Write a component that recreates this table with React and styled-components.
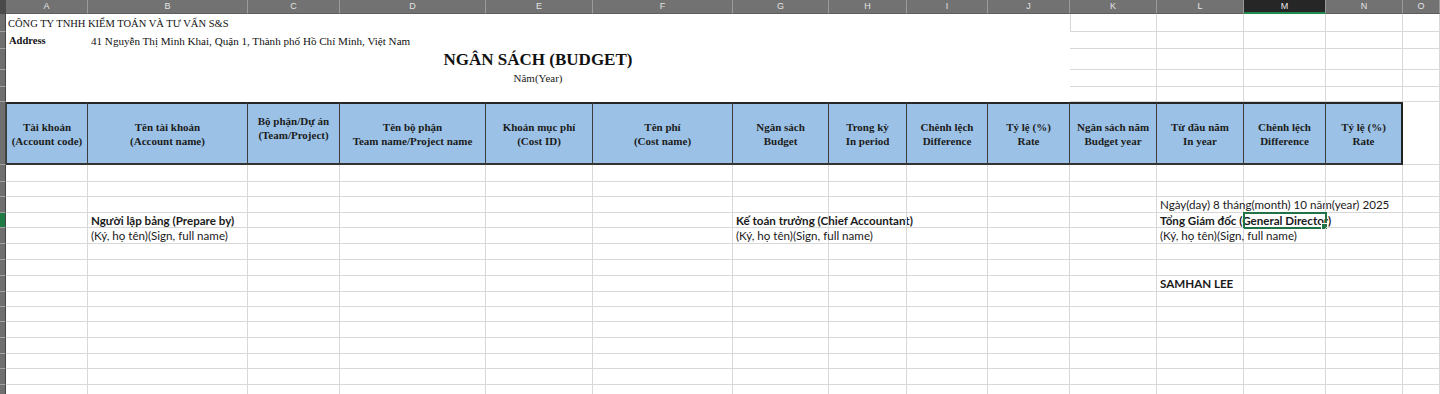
import React from 'react';
import styled, { createGlobalStyle } from 'styled-components';

const COLS = [82, 160, 92, 146, 107, 140, 96, 78, 81, 82, 87, 87, 82, 77];
const LETTERS = 'ABCDEFGHIJKLMNO'.split('');
const TEMPLATE = `6px ${COLS.map(c => c + 'px').join(' ')} 1fr`;

const SERIF = `"Liberation Serif", "Times New Roman", serif`;
const SANS = `Lato, "Liberation Sans", sans-serif`;
const GRID = '#d8d8d8';

const GlobalStyle = createGlobalStyle`
  html, body {
    margin: 0;
    background: #fff;
    overflow: hidden;
  }
  * { box-sizing: border-box; }
`;

const Sheet = styled.div`
  width: 1440px;
  height: 394px;
  overflow: hidden;
  display: flex;
  flex-direction: column;
  background: #fff;
`;

const Row = styled.div`
  display: grid;
  grid-template-columns: ${TEMPLATE};
  height: ${p => p.$h}px;
  flex: none;
`;

const Corner = styled.div`
  background: #4a4a4a;
`;

const ColLetter = styled.div`
  display: flex;
  align-items: center;
  justify-content: center;
  background: ${p => (p.$active ? '#262626' : '#727272')};
  color: ${p => (p.$active ? '#e8e8e8' : '#e4e4e4')};
  border-right: 1px solid #9a9a9a;
  border-bottom: ${p => (p.$active ? '2px solid #1f8a4c' : '1px solid #5e5e5e')};
  font-family: "Liberation Sans", Arial, sans-serif;
  font-size: 9px;
  line-height: 1;
`;

const Strip = styled.div`
  background: ${p => (p.$active ? '#1f7a45' : '#6f6f6f')};
  border-right: 1px solid #444;
  border-bottom: 1px solid #a2a2a2;
`;

const Blank = styled.div`
  grid-column: ${p => p.$span};
  display: flex;
  align-items: center;
  justify-content: ${p => (p.$center ? 'center' : 'flex-start')};
  padding-left: ${p => (p.$center ? 0 : 2)}px;
  white-space: nowrap;
  overflow: visible;
`;

const Company = styled.span`
  font-family: ${SERIF};
  font-size: ${p => p.$size || 10.5}px;
  font-weight: ${p => (p.$bold ? 'bold' : 'normal')};
  padding-left: ${p => p.$pad || 0}px;
  color: #111;
`;

const Title = styled.span`
  font-family: ${SERIF};
  font-size: 17px;
  font-weight: bold;
  color: #111;
`;

const Subtitle = styled.span`
  font-family: ${SERIF};
  font-size: 11px;
  color: #222;
  margin-top: -2px;
`;

const Cell = styled.div`
  position: relative;
  display: flex;
  align-items: center;
  padding-left: 3px;
  white-space: nowrap;
  overflow: visible;
  border-right: 1px solid ${GRID};
  border-bottom: 1px solid ${GRID};
  border-left: ${p => (p.$left ? `1px solid ${GRID}` : 'none')};
  font-family: ${SANS};
  font-size: 11.6px;
  font-weight: ${p => (p.$bold ? 'bold' : 'normal')};
  color: #1a1a1a;
  outline: ${p => (p.$selected ? '2px solid #217346' : 'none')};
  outline-offset: -1px;

  ${p => p.$selected && `
    &::after {
      content: '';
      position: absolute;
      right: -3px;
      bottom: -3px;
      width: 5px;
      height: 5px;
      background: #217346;
      border: 1px solid #fff;
    }
  `}
`;

const HeadCell = styled.div`
  display: flex;
  flex-direction: column;
  align-items: center;
  justify-content: ${p => (p.$top ? 'flex-start' : 'center')};
  padding-top: ${p => (p.$top ? 10 : 0)}px;
  background: #9bc2e6;
  border-top: 2px solid #262626;
  border-bottom: 2px solid #333;
  border-right: ${p => (p.$last ? '2px solid #222' : '1px solid #3c3c3c')};
  border-left: ${p => (p.$first ? '1px solid #3c3c3c' : 'none')};
  font-family: ${SERIF};
  font-size: 11px;
  font-weight: bold;
  color: #1c1c1c;
  line-height: 14px;
  text-align: center;
  white-space: nowrap;
`;

const HEADERS = [
  ['Tài khoản', '(Account code)'],
  ['Tên tài khoản', '(Account name)'],
  ['Bộ phận/Dự án', '(Team/Project)', true],
  ['Tên bộ phận', 'Team name/Project name'],
  ['Khoản mục phí', '(Cost ID)'],
  ['Tên phí', '(Cost name)'],
  ['Ngân sách', 'Budget'],
  ['Trong kỳ', 'In period'],
  ['Chênh lệch', 'Difference'],
  ['Tỷ lệ (%)', 'Rate'],
  ['Ngân sách năm', 'Budget year'],
  ['Từ đầu năm', 'In year'],
  ['Chênh lệch', 'Difference'],
  ['Tỷ lệ (%)', 'Rate'],
];

const SIGN = '(Ký, họ tên)(Sign, full name)';

const BODY = [
  { h: 17 },
  { h: 15 },
  { h: 16, cells: { L: { text: 'Ngày(day) 8 tháng(month) 10 năm(year) 2025' } } },
  {
    h: 15,
    active: true,
    cells: {
      B: { text: 'Người lập bảng (Prepare by)', bold: true },
      G: { text: 'Kế toán trưởng (Chief Accountant)', bold: true },
      L: { text: 'Tổng Giám đốc (General Director)', bold: true },
      M: { selected: true },
    },
  },
  { h: 16, cells: { B: { text: SIGN }, G: { text: SIGN }, L: { text: SIGN } } },
  { h: 16 },
  { h: 16 },
  { h: 16, cells: { L: { text: 'SAMHAN LEE', bold: true } } },
  { h: 15 },
  { h: 15 },
  { h: 16 },
  { h: 16 },
  { h: 15 },
  { h: 16 },
  { h: 16 },
];

const RightGrid = ({ kLeft }) =>
  ['K', 'L', 'M', 'N', 'O'].map(l => <Cell key={l} $left={l === 'K' && kLeft} />);

const App = () => (
  <>
    <GlobalStyle />
    <Sheet>
      <Row $h={14}>
        <Corner />
        {LETTERS.map(l => (
          <ColLetter key={l} $active={l === 'M'}>{l}</ColLetter>
        ))}
      </Row>

      <Row $h={18}>
        <Strip />
        <Blank $span="2 / 12">
          <Company>CÔNG TY TNHH KIỂM TOÁN VÀ TƯ VẤN S&amp;S</Company>
        </Blank>
        <RightGrid kLeft />
      </Row>
      <Row $h={17}>
        <Strip />
        <Blank $span="2 / 3">
          <Company $bold $pad={1}>Address</Company>
        </Blank>
        <Blank $span="3 / 12">
          <Company $size={11.1} $pad={1}>
            41 Nguyễn Thị Minh Khai, Quận 1, Thành phố Hồ Chí Minh, Việt Nam
          </Company>
        </Blank>
        <RightGrid />
      </Row>
      <Row $h={21}>
        <Strip />
        <Blank $span="2 / 12" $center>
          <Title>NGÂN SÁCH (BUDGET)</Title>
        </Blank>
        <RightGrid />
      </Row>
      <Row $h={17}>
        <Strip />
        <Blank $span="2 / 12" $center>
          <Subtitle>Năm(Year)</Subtitle>
        </Blank>
        <RightGrid />
      </Row>
      <Row $h={15}>
        <Strip />
        <Blank $span="2 / 12" />
        <RightGrid />
      </Row>

      <Row $h={63}>
        <Strip />
        {HEADERS.map(([a, b, top], i) => (
          <HeadCell key={i} $top={top} $first={i === 0} $last={i === HEADERS.length - 1}>
            <span>{a}</span>
            <span>{b}</span>
          </HeadCell>
        ))}
        <Cell />
      </Row>

      {BODY.map((row, r) => (
        <Row key={r} $h={row.h}>
          <Strip $active={row.active} />
          {LETTERS.map(l => {
            const c = (row.cells && row.cells[l]) || {};
            return (
              <Cell key={l} $bold={c.bold} $selected={c.selected}>
                {c.text}
              </Cell>
            );
          })}
        </Row>
      ))}
    </Sheet>
  </>
);

export default App;
